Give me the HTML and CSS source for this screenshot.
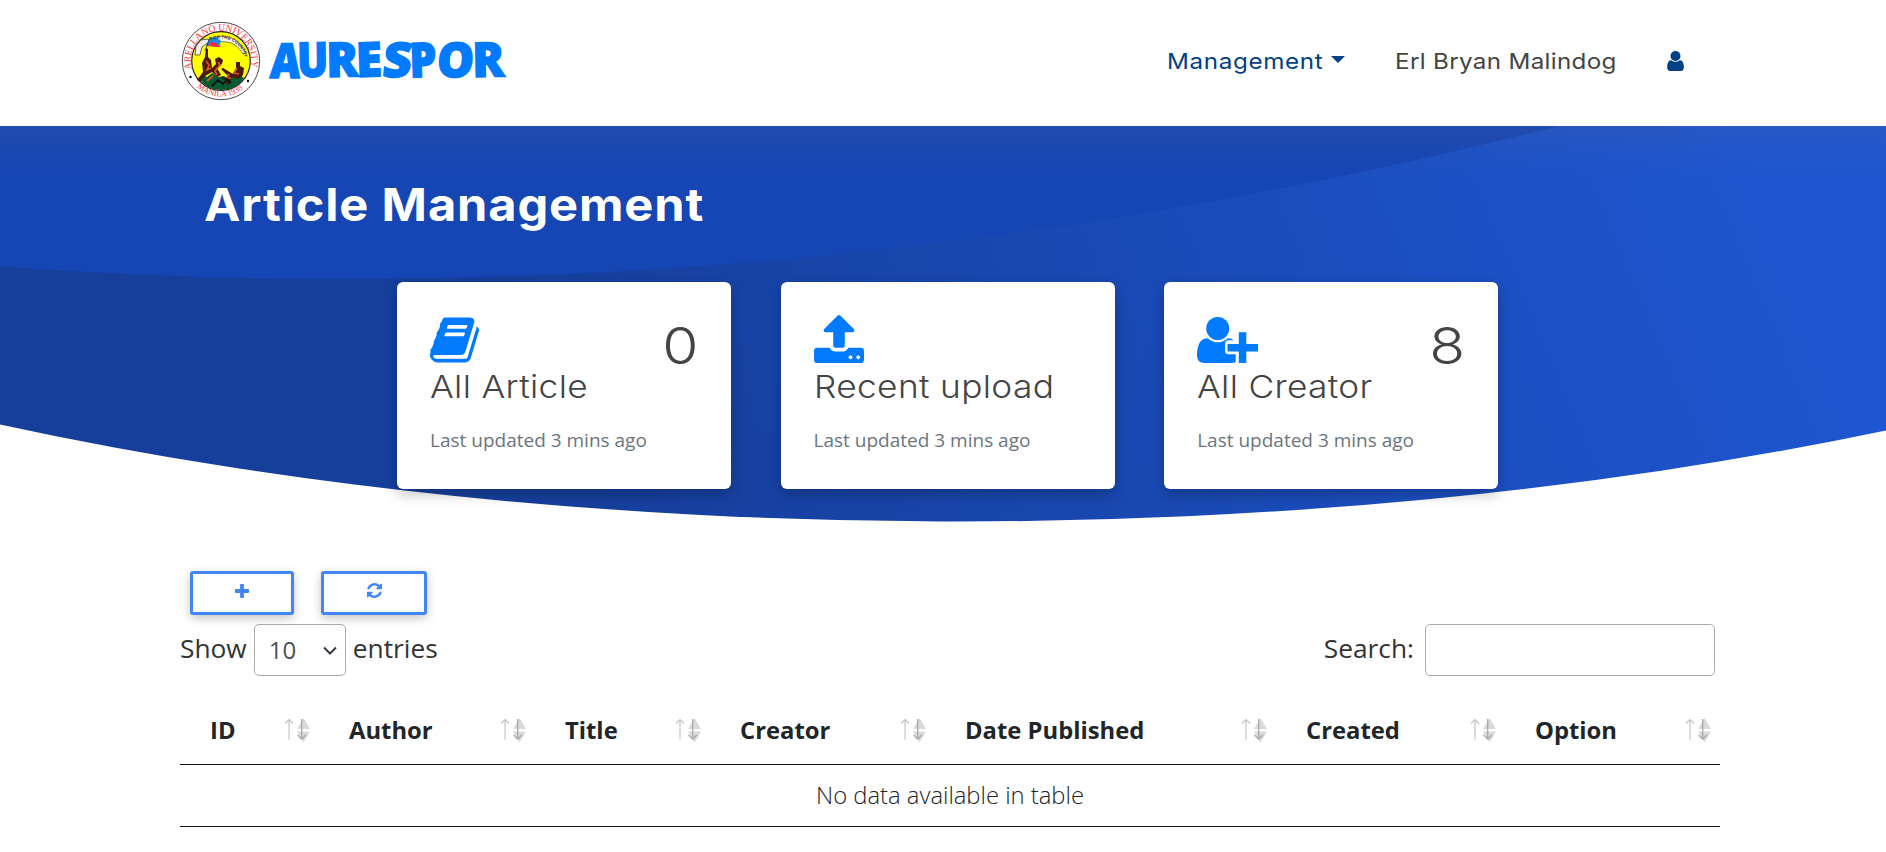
FILE: index.html
```html
<!DOCTYPE html>
<html lang="en">
<head>
<meta charset="utf-8">
<title>Aurespor - Article Management</title>
<link rel="stylesheet" href="styles.css">
</head>
<body>
<header class="navbar">
  <a class="brand">
    <svg class="seal" viewBox="0 0 80 80">
      <defs>
        <path id="ring-top" d="M10.900 48 A30.200 30.200 0 1 1 69.100 48"/>
        <path id="ring-bottom" d="M9 57.500 A35.700 35.700 0 0 0 71 57.500"/>
        <path id="motto" d="M16 37 A24.500 24.500 0 0 1 64 37"/>
      </defs>
      <circle cx="40" cy="40" r="38.700" fill="#fff" stroke="#333" stroke-width=".9"/>
      <circle cx="40" cy="40" r="29.300" fill="#ff0" stroke="#222" stroke-width="1.200"/>
      <path d="M18 57q3-4 8-1l5-4 6 4 6-1 5 3 5-5 6 1 4 3q-7 11-22 12-16 0-23-12z" fill="#075c35"/>
      <path d="M22 51l-1-9 3-6 1-9 2 1 0 8 3 3 1 8 4-4-1-5 4-2 4 3-1 4-5 4 4 7-4 2-5-5-7 4-5 6-3-2zM42 47l10 6 3-6 0-6 4 0 0 4 4 2-1 7-5 4-6-2-3 8-3-1 2-8-7-7z" fill="#4c1808"/>
      <path d="M25 40l3 4-2 5 4-2M37 41l2 3-5 6 2 4M56 47l-3 5 5 1M26 60l6-5M48 53l-3 5 5-1" fill="none" stroke="#d45a20" stroke-width="1.700"/>
      <path d="M31 65l6-6 5 4 4-5 4 4M41 57l7 2" fill="none" stroke="#111" stroke-width="1.800"/>
      <path d="M16 34l-2 0 1-9 5-6 7-1 2 3-4 2-4 3-2 8z" fill="#eee" stroke="#444" stroke-width=".8"/>
      <path d="M34 16q15-3 24 6l7 10-3 1q-7-12-17-12-6-1-11 0z" fill="#f5f5ee" stroke="#555" stroke-width=".7"/>
      <path d="M25 25l4-8 6-1 5 4-2 6-8-1z" fill="#2388e8"/>
      <path d="M26 26l4-5 5 1 5 4-5 0-7-1z" fill="#ed3045"/>
      <path d="M24 30l5-14" stroke="#222" stroke-width=".8"/>
      <circle cx="9.500" cy="56" r="1.200"/><circle cx="67" cy="60" r="1.200"/>
      <text class="seal-text" font-size="10"><textPath href="#ring-top" textLength="109" lengthAdjust="spacingAndGlyphs">ARELLANO UNIVERSITY</textPath></text>
      <text class="seal-text" font-size="8.500"><textPath href="#ring-bottom" startOffset="11" textLength="50" lengthAdjust="spacingAndGlyphs">MANILA 1938</textPath></text>
      <text class="seal-motto"><textPath href="#motto" startOffset="23">FOR THE COUNTRY</textPath></text>
    </svg>
    <svg class="wordmark" viewBox="0 -20 242 90">
        <text transform="translate(1.500 41.500) skewX(-4)" textLength="30" lengthAdjust="spacingAndGlyphs">A</text>
        <text transform="translate(29.500 41) rotate(-1)" textLength="31" lengthAdjust="spacingAndGlyphs">U</text>
        <text transform="translate(58.500 41) rotate(-1)" textLength="32" lengthAdjust="spacingAndGlyphs">R</text>
        <text transform="translate(88.500 41) rotate(-2)" textLength="26" lengthAdjust="spacingAndGlyphs">E</text>
        <text transform="translate(113.500 41) skewX(-6)" textLength="29" lengthAdjust="spacingAndGlyphs">S</text>
        <text transform="translate(142 41.500) rotate(-2)" textLength="27" lengthAdjust="spacingAndGlyphs">P</text>
        <text transform="translate(168 41) skewX(-4)" textLength="37" lengthAdjust="spacingAndGlyphs">O</text>
        <text transform="translate(204.500 41) rotate(-1)" textLength="32" lengthAdjust="spacingAndGlyphs">R</text>
    </svg>
  </a>
  <nav class="menu">
    <a class="menu-link"><span class="wide">Management</span><i class="caret"></i></a>
    <a class="menu-name"><span class="wide">Erl Bryan Malindog</span></a>
    <a class="menu-user"><svg viewBox="0 128 1280 1536"><path d="M1280 1399q0 109-62.500 187t-150.500 78h-854q-88 0-150.500-78t-62.500-187q0-85 8.500-160.500t31.500-152 58.500-131 94-89 134.500-34.500q131 128 313 128t313-128q76 0 134.500 34.500t94 89 58.500 131 31.500 152 8.500 160.500zm-256-887q0 159-112.500 271.500t-271.500 112.500-271.500-112.500-112.500-271.500 112.500-271.500 271.500-112.500 271.500 112.500 112.500 271.500z"/></svg></a>
  </nav>
</header>

<section class="hero">
  <svg class="hero-bg" viewBox="0 0 1886 398">
    <defs>
      <linearGradient id="sky" gradientUnits="userSpaceOnUse" x1="560" y1="290" x2="1660" y2="-180">
        <stop offset="0" stop-color="#163f9c"/><stop offset="1" stop-color="#1e55d0"/>
      </linearGradient>
    </defs>
    <path d="M0 0H1886V304.500A1958 760 0 0 1 0 298.500Z" fill="url(#sky)"/>
    <path d="M0 0H1559Q779.500 197 0 140.500Z" fill="#1645b4"/>
  </svg>
  <div class="hero-glow"></div>
  <h1>Article Management</h1>
  <div class="cards">
    <article class="card">
      <div class="card-top">
        <svg class="ic-book" viewBox="64 128 1664 1536"><path d="M1703 478q40 57 18 129l-275 906q-19 64-76.500 107.500t-122.500 43.500h-923q-77 0-148.500-53.500t-99.500-131.500q-24-67-2-127 0-4 3-27t4-37q1-8-3-21.500t-3-19.500q2-11 8-21t16.500-23.500 16.500-23.500q23-38 45-91.500t30-91.500q3-10 .5-30t-.5-28q3-11 17-28t17-23q21-36 42-92t25-90q1-9-2.500-32t.5-28q4-13 22-30.500t22-22.500q19-26 42.500-84.500t27.500-96.500q1-8-3-25.500t-2-26.500q2-8 9-18t18-23 17-21q8-12 16.500-30.500t15-35 16-36 19.500-32 26.500-23.500 36-11.500 47.500 5.500l-1 3q38-9 51-9h761q74 0 114 56t18 130l-274 906q-36 119-71.500 153.500t-128.500 34.500h-869q-27 0-38 15-11 16-1 43 24 70 144 70h923q29 0 56-15.500t35-41.500l300-987q7-22 5-57 38 15 59 43zm-1064 2q-4 13 2 22.500t20 9.500h608q13 0 25.500-9.500t16.500-22.500l21-64q4-13-2-22.500t-20-9.500h-608q-13 0-25.500 9.500t-16.500 22.500zm-83 256q-4 13 2 22.500t20 9.500h608q13 0 25.500-9.500t16.500-22.500l21-64q4-13-2-22.500t-20-9.500h-608q-13 0-25.500 9.500t-16.500 22.500z"/></svg>
        <span class="count">0</span>
      </div>
      <h2>All Article</h2>
      <p>Last updated 3 mins ago</p>
    </article>
    <article class="card">
      <div class="card-top">
        <svg class="ic-upload" viewBox="64 64 1664 1600"><path d="M1344 1472q0-26-19-45t-45-19-45 19-19 45 19 45 45 19 45-19 19-45zm256 0q0-26-19-45t-45-19-45 19-19 45 19 45 45 19 45-19 19-45zm128-224v320q0 40-28 68t-68 28h-1472q-40 0-68-28t-28-68v-320q0-40 28-68t68-28h427q21 56 70.500 92t110.500 36h256q61 0 110.500-36t70.500-92h427q40 0 68 28t28 68zm-325-648q-17 40-59 40h-256v448q0 26-19 45t-45 19h-256q-26 0-45-19t-19-45v-448h-256q-42 0-59-40-17-39 14-69l448-448q18-19 45-19t45 19l448 448q31 30 14 69z"/></svg>
      </div>
      <h2>Recent upload</h2>
      <p>Last updated 3 mins ago</p>
    </article>
    <article class="card">
      <div class="card-top">
        <svg class="ic-plus-user" viewBox="0 0 61 46"><circle cx="20.700" cy="11.500" r="11.500"/><path d="M10.500 21.200Q20.700 29.500 31 21.200Q34 20.800 37 23.300H31.500Q28 23.500 28 27V34Q28 37.300 31.500 37.300H38.700V45.200Q37 46 34 46H7.500Q0 46 0 38.500Q0 21.500 10.500 21.200Z"/><path d="M41.800 15.200H49.300V27H61V34.500H49.300V46H41.800V34.500H30.500V27H41.800Z"/></svg>
        <span class="count">8</span>
      </div>
      <h2>All Creator</h2>
      <p>Last updated 3 mins ago</p>
    </article>
  </div>
</section>

<main class="content">
  <div class="actions">
    <button class="btn btn-add"><svg viewBox="192 128 1408 1408"><path d="M1600 736v192q0 40-28 68t-68 28h-416v416q0 40-28 68t-68 28h-192q-40 0-68-28t-28-68v-416h-416q-40 0-68-28t-28-68v-192q0-40 28-68t68-28h416v-416q0-40 28-68t68-28h192q40 0 68 28t28 68v416h416q40 0 68 28t28 68z"/></svg></button>
    <button class="btn btn-refresh"><svg viewBox="128 128 1536 1536"><path d="M1639 1056q0 5-1 7-64 268-268 434.500t-478 166.500q-146 0-282.500-55t-243.500-157l-129 129q-19 19-45 19t-45-19-19-45v-448q0-26 19-45t45-19h448q26 0 45 19t19 45-19 45l-137 137q71 66 161 102t187 36q134 0 250-65t186-179q11-17 53-117 8-23 30-23h192q13 0 22.500 9.500t9.500 22.500zm25-800v448q0 26-19 45t-45 19h-448q-26 0-45-19t-19-45 19-45l138-138q-148-137-349-137-134 0-250 65t-186 179q-11 17-53 117-8 23-30 23h-199q-13 0-22.500-9.500t-9.500-22.500v-7q65-268 270-434.500t480-166.500q146 0 284 55.500t245 156.500l130-129q19-19 45-19t45 19 19 45z"/></svg></button>
  </div>
  <div class="controls">
    <label class="length"><span class="label">Show</span>
      <span class="select"><span class="label">10</span><svg viewBox="0 0 14 9"><path d="M1 1.500l6 6 6-6"/></svg></span>
      <span class="label">entries</span></label>
    <label class="search"><span class="label">Search:</span><input type="text"></label>
  </div>
  <table class="grid">
    <colgroup><col class="c1"><col class="c2"><col class="c3"><col class="c4"><col class="c5"><col class="c6"><col class="c7"></colgroup>
    <thead>
      <tr>
        <th><div>ID<svg><use href="#sort"/></svg></div></th>
        <th><div>Author<svg><use href="#sort"/></svg></div></th>
        <th><div>Title<svg><use href="#sort"/></svg></div></th>
        <th><div>Creator<svg><use href="#sort"/></svg></div></th>
        <th><div>Date Published<svg><use href="#sort"/></svg></div></th>
        <th><div>Created<svg><use href="#sort"/></svg></div></th>
        <th><div>Option<svg><use href="#sort"/></svg></div></th>
      </tr>
    </thead>
    <tbody><tr><td colspan="7">No data available in table</td></tr></tbody>
  </table>
</main>
<svg class="sprites">
  <symbol id="sort" viewBox="0 0 26 26">
    <path d="M5 22.500V3M1 6.500l4-4 4 4" fill="none" stroke="#c4c4c4" stroke-width="1.200"/>
    <path d="M19.500 1L26 12H13zM13 14.500h13L19.500 25.500z" fill="#d9d9d9"/>
    <path d="M17.700 2v20M13.500 18l4.200 4.200 4.200-4.200" fill="none" stroke="#a9a9a9" stroke-width="1.300"/>
  </symbol>
</svg>
</body>
</html>
```
FILE: styles.css
```css
* { box-sizing: border-box; }
body { margin: 0; background: #fff; color: #212529; font-family: "Open Sans", sans-serif; overflow: hidden; }
h1, h2, p { margin: 0; }

.navbar { height: 126px; padding: 0 202px 0 181px; display: flex; justify-content: space-between; align-items: flex-start; font-family: Inter, sans-serif; }
.brand { display: flex; padding-top: 21px; }
.seal { width: 80px; height: 80px; }
.seal-text { font-family: "Liberation Serif", serif; fill: #f33; }
.seal-motto { font: bold 4.500px "Liberation Sans", sans-serif; fill: #333; }
.wordmark { width: 242px; height: 90px; margin: -5px 0 0 7px; }
.wordmark text { font: 800 48px "Open Sans", sans-serif; fill: #007bff; stroke: #007bff; stroke-width: 1.500px; stroke-linejoin: miter; }
.menu { display: flex; align-items: center; height: 122px; font-size: 22px; }
.wide { display: inline-block; transform: scaleX(1.1); transform-origin: left; letter-spacing: .6px; white-space: nowrap; }
.menu-link { color: #004085; width: 178px; margin-right: 50px; display: flex; align-items: center; justify-content: space-between; }
.caret { border: 7px solid transparent; border-top-color: #004085; border-bottom: 0; margin-top: -3px; }
.menu-name { color: #444; width: 222px; margin-right: 50px; }
.menu-name .wide { letter-spacing: .3px; }
.menu-user { display: flex; }
.menu-user svg { width: 17px; height: 20px; fill: #004085; }

.hero { position: relative; height: 398px; padding: 49px 0 0 204px; }
.hero-bg { position: absolute; inset: 0; width: 1886px; height: 398px; }
.hero-glow { position: absolute; inset: 0 0 auto; height: 50px; background: linear-gradient(rgba(80, 100, 155, .22), rgba(80, 100, 155, .08) 50%, rgba(80, 100, 155, 0)); }
.hero h1 { position: relative; width: max-content; color: #fff; font: 700 45px/60px Inter, sans-serif; letter-spacing: .8px; transform: scaleX(1.083); transform-origin: left; }
.cards { position: relative; display: grid; grid-template-columns: repeat(3, 334.300px); gap: 49.300px; margin: 47px 0 0 193px; }
.card { height: 207px; border-radius: 6px; background: #fff; padding: 32px 33px 0; box-shadow: 0 5px 14px rgba(0, 0, 0, .25); }
.card-top { height: 50px; display: flex; justify-content: space-between; }
.card svg { fill: #007bff; display: block; }
.ic-book { width: 49px; height: 46px; margin-top: 3px; }
.ic-upload { width: 50px; height: 48px; margin-top: 1px; }
.ic-plus-user { width: 61px; height: 46px; margin-top: 3px; }
.count { font: 300 51px/64px Inter, sans-serif; color: #444; transform: scaleX(1.15); transform-origin: right; }
.card h2 { width: max-content; font: 300 31.500px/40px Inter, sans-serif; letter-spacing: .3px; color: #444; margin-top: 3px; white-space: nowrap; transform: scaleX(1.12); transform-origin: left; }
.card p { font-size: 19px; line-height: 28px; color: #6c757d; margin-top: 19px; }

.content { width: 1540px; margin: 0 0 0 180px; padding-top: 47px; }
.actions { display: flex; gap: 27px; padding-left: 10px; }
.btn { height: 44px; padding: 0 0 5px; border: 3px solid #4285f4; border-radius: 3px; background: #fff; display: flex; align-items: center; justify-content: center; box-shadow: 0 3px 10px rgba(0, 0, 0, .24); }
.btn svg { fill: #4285f4; }
.btn-add { width: 104px; }
.btn-add svg { width: 14px; height: 14px; }
.btn-refresh { width: 106px; }
.btn-refresh svg { width: 15px; height: 15px; }
.controls { display: flex; justify-content: space-between; margin-top: 9px; padding-right: 5px; font-size: 26.300px; }
.length, .search { display: flex; align-items: center; height: 52px; }
.label { padding-bottom: 4px; color: #333; }
.select { display: flex; align-items: center; justify-content: space-between; width: 92px; height: 52px; border: 1px solid #aaa; border-radius: 5px; margin: 0 7px; padding: 0 8px 0 14px; font-size: 24px; }
.select .label { padding-bottom: 2px; color: #495057; }
.select svg { width: 14px; height: 9px; fill: none; stroke: #343a40; stroke-width: 2; }
.search input { width: 290px; height: 52px; border: 1px solid #aaa; border-radius: 5px; margin: 0 0 0 11px; background: #fff; }
.grid { width: 1540px; table-layout: fixed; border-collapse: collapse; margin-top: 26px; font-size: 23.800px; }
.c1 { width: 139px; } .c2 { width: 216px; } .c3 { width: 175px; } .c4 { width: 225px; } .c5 { width: 341px; } .c6 { width: 229px; } .c7 { width: 215px; }
.grid th { height: 62px; padding: 0 9px 5px 30px; text-align: left; border-bottom: 1px solid #111; }
.grid th div { display: flex; justify-content: space-between; align-items: center; white-space: nowrap; }
.grid th svg { width: 26px; height: 26px; margin-top: -1px; }
.grid td { height: 62px; padding: 0 0 1px; text-align: center; font-weight: 300; border-bottom: 1px solid #111; }
.sprites { position: absolute; width: 0; height: 0; }
```
